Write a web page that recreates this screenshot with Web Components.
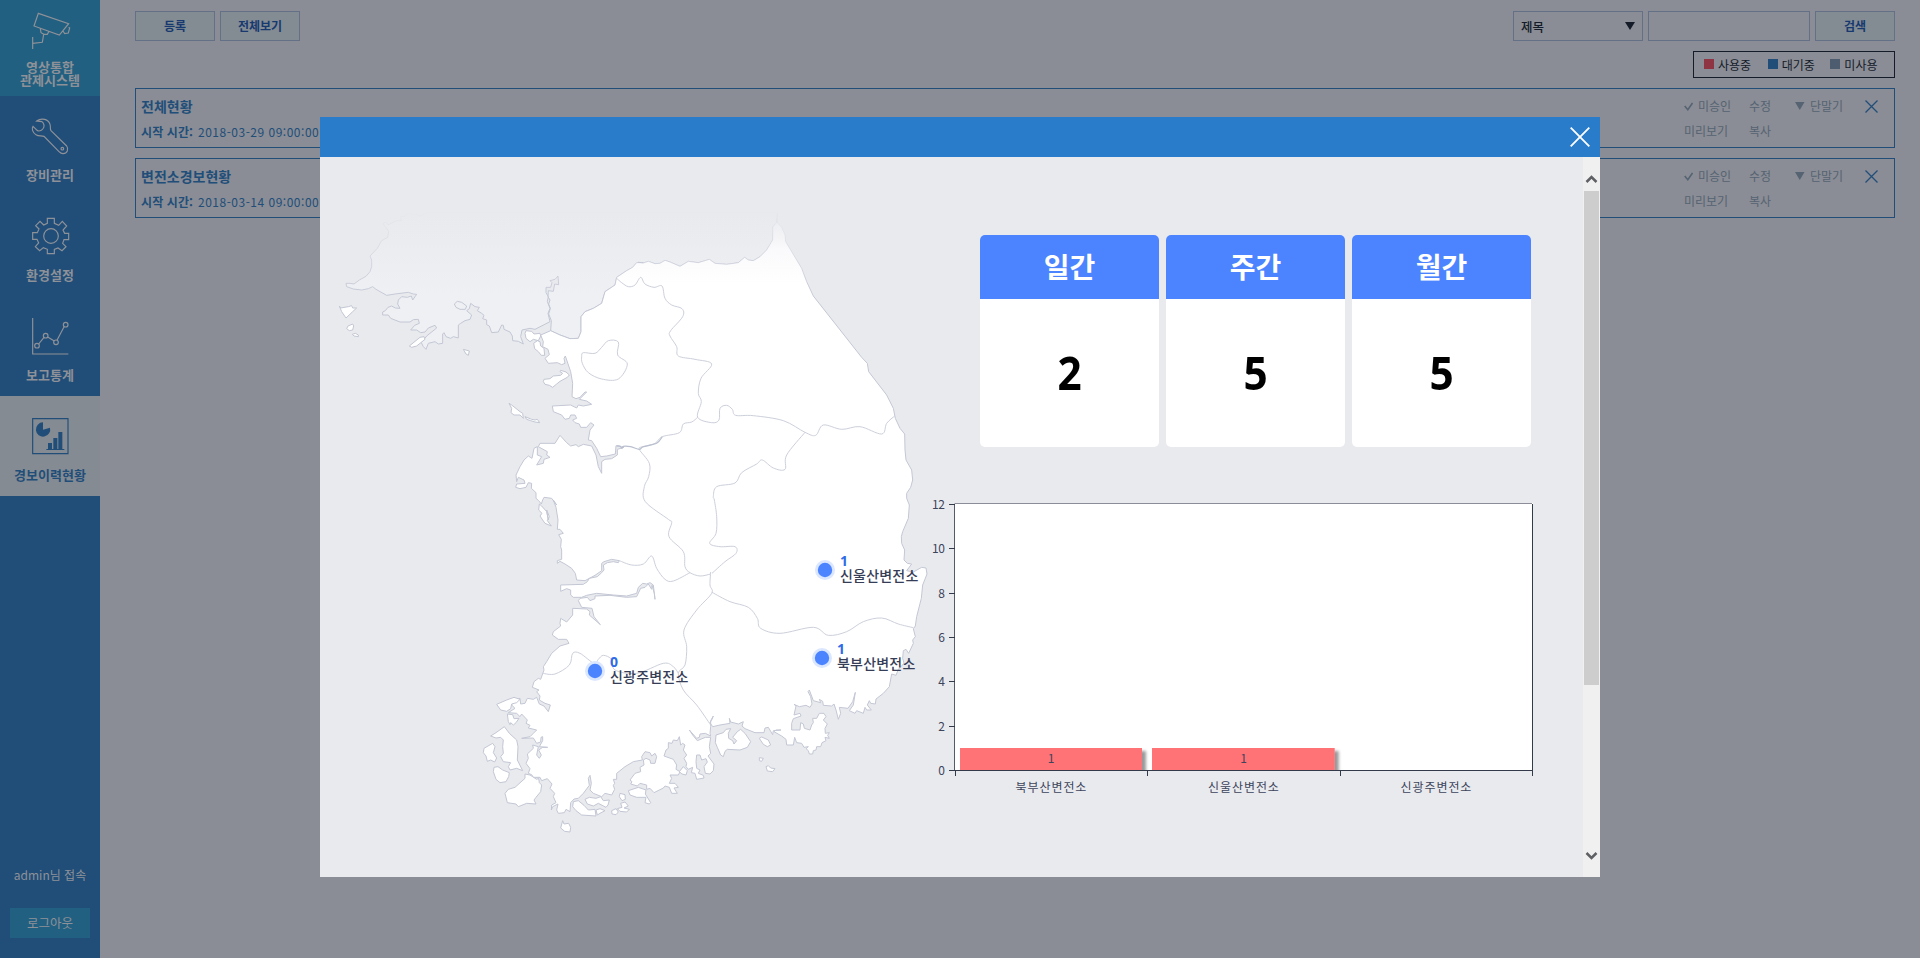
<!DOCTYPE html>
<html lang="ko">
<head>
<meta charset="utf-8">
<title>영상통합 관제시스템</title>
<style>
html,body{margin:0;height:100%;overflow:hidden;background:#8a8d95;font-family:"Noto Sans CJK KR","Noto Sans",sans-serif;font-size:12px}
</style>
</head>
<body>
<monitor-app></monitor-app>
<script>
const define = (name, html, setup) => customElements.define(name, class extends HTMLElement {
  connectedCallback() {
    if (this.shadowRoot) return;
    const t = document.createElement('template');
    t.innerHTML = typeof html === 'function' ? html(this) : html;
    this.attachShadow({mode: 'open'}).append(t.content.cloneNode(true));
    if (setup) setup(this.shadowRoot, this);
  }
});

/* ---- sidebar ---- */
const icons = {
  camera: '<svg viewBox="0 0 300 183" height="61"><path d="M115 40 206 71 178 105 102 78ZM206 82 209 84 205 99 194 101 189 93M121 86 123 98 132 103 142 103 147 94M131 103 127 127 98 130M98 111V147"/></svg>',
  wrench: '<svg viewBox="0 288 300 210" height="70"><path d="M110 363C125 352 146 358 150 373C153 382 149 387 153 392L200 438C207 447 202 461 189 461C184 461 181 459 177 455L132 409C123 406 117 410 108 404C98 398 94 386 99 379L109 389C112 393 118 394 124 391C131 387 134 378 131 372C130 369 128 366 126 365L110 363Z"/><circle cx="187" cy="446" r="4"/></svg>',
  gear: '<svg viewBox="0 588 300 210" height="70"><path d="M142 655H163V670L176 676 187 664 200 678 189 690 194 700H206V719H192L188 730 198 740 186 752 174 744 163 748V761H142V748L130 743 119 752 106 740 116 729 111 718H98V698H112L117 687 107 677 120 664 131 675 142 670Z"/><circle cx="153" cy="708" r="22"/></svg>',
  graph: '<svg viewBox="0 108 300 210" height="70"><path d="M98 174V282H205M116 252 132 232M143 231 163 243M171 241 193 199"/><circle cx="111" cy="257" r="7"/><circle cx="137" cy="227" r="7"/><circle cx="168" cy="247" r="7"/><circle cx="197" cy="194" r="7"/></svg>',
  report: '<svg viewBox="0 408 300 210" height="70"><path d="M98 476H204V581H98Z"/><path d="M129 487A21.5 21.5 0 1 0 150 503L129 509ZM144 549H156V568H144ZM160 534H172V568H160ZM175 516H187V568H175ZM139 567H193V570H139Z" fill="currentColor" stroke="none"/></svg>'
};
define('nav-item', el => `<style>
:host{display:block;height:100px;box-sizing:border-box;color:#8e9198;text-align:center;font-weight:700;font-size:13px}
:host([kind=camera]){height:96px;background:#226081}
:host([kind=report]){background:#858b92;color:#214e79}
svg{display:block;width:100px;fill:none;stroke:currentColor;stroke-width:3.5}
div{line-height:20px;margin-top:-1px;white-space:nowrap}
:host([kind=camera]) div{line-height:13px}
</style>${icons[el.getAttribute('kind')]}<div><slot></slot></div>`);

define('side-bar', `<style>
:host{display:flex;flex-direction:column;width:100px;height:958px;background:#214e79;color:#8e9198;text-align:center}
.user{margin-top:auto;line-height:18px;font-size:12px;white-space:nowrap}
.out{margin:24px 10px 20px;height:30px;line-height:30px;background:#226081;font-size:12.5px}
</style>
<nav-item kind="camera">영상통합<br>관제시스템</nav-item>
<nav-item kind="wrench">장비관리</nav-item>
<nav-item kind="gear">환경설정</nav-item>
<nav-item kind="graph">보고통계</nav-item>
<nav-item kind="report">경보이력현황</nav-item>
<div class="user">admin님 접속</div>
<div class="out">로그아웃</div>`);

/* ---- page behind the dialog ---- */
define('push-button', `<style>
:host{display:block;box-sizing:border-box;width:80px;height:30px;border:1px solid #637085;background:#838c93;color:#17396f;font-weight:700;line-height:28px;text-align:center}
</style><slot></slot>`);

define('tool-bar', `<style>
:host{display:flex;gap:5px;height:30px}
.select,.input{box-sizing:border-box;border:1px solid #637085;height:30px}
.select{margin-left:auto;width:130px;display:flex;justify-content:space-between;align-items:center;padding:0 7px;color:#141b29;font-weight:500;font-size:12.5px}
.input{width:162px}
svg{width:10px;height:8px}
</style>
<push-button>등록</push-button><push-button>전체보기</push-button>
<div class="select">제목<svg viewBox="0 0 10 8"><path d="M0 0H10L5 8Z" fill="#141b29"/></svg></div>
<div class="input"></div><push-button>검색</push-button>`);

define('status-legend', `<style>
:host{display:flex;box-sizing:border-box;width:202px;height:27px;margin:10px 0 10px auto;border:1px solid #141b29;padding-left:10px;color:#141b29;line-height:26px}
span{width:64px;display:flex;white-space:nowrap}
i{width:10px;height:10px;margin:7px 4px 0 0}
</style>
<span><i style="background:#8e3442"></i>사용중</span><span style="width:63px"><i style="background:#214e79"></i>대기중</span><span><i style="background:#4d5c6e"></i>미사용</span>`);

define('schedule-row', `<style>
:host{display:flex;justify-content:space-between;box-sizing:border-box;height:60px;margin-bottom:10px;border:1px solid #214e79;color:#214e79;padding-left:5px}
.title{font-size:14px;font-weight:700;line-height:20px;margin-top:7px}
.time{line-height:20px;margin-top:6px;letter-spacing:.5px}
.time b{letter-spacing:.1px;margin-right:5px}
.acts{display:grid;grid-template-columns:65px 46px 70px 29px;grid-template-rows:24px 24px;padding-top:5px;row-gap:1px;color:#566372;line-height:24px}
.a{display:flex;align-items:center;gap:5px}
svg{fill:none;stroke:currentColor}
</style>
<div><div class="title"><slot></slot></div><div class="time"><b>시작 시간:</b><slot name="time"></slot></div></div>
<div class="acts">
<div class="a"><svg width="9" height="9"><path d="M.7 4 3.8 7.7 8.5 1" stroke-width="1.6"/></svg>미승인</div><div>수정</div>
<div class="a"><svg width="10" height="8"><path d="M0 0H9.500L4.750 8Z" fill="currentColor" stroke="none"/></svg>단말기</div>
<div class="a"><svg width="13" height="13" style="color:#214e79"><path d="M.5.5 12.500 12.500M12.500.5.5 12.500" stroke-width="1.300"/></svg></div>
<div>미리보기</div><div>복사</div>
</div>`);

/* ---- map ----
   Points are in thirds of a pixel, grouped by the tile they belong to. */
const tiles = {A: [320, 200], B: [600, 200], C: [470, 500], D: [700, 500]};
const pts = spec => {
  const out = []; let o;
  const tok = spec.match(/[A-D]|-?[\d.]+/g);
  for (let i = 0; i < tok.length;) {
    if (tiles[tok[i]]) { o = tiles[tok[i++]]; continue; }
    out.push([+(o[0] + tok[i] / 3).toFixed(2), +(o[1] + tok[i + 1] / 3).toFixed(2)]); i += 2;
  }
  return out;
};
const poly = s => 'M' + pts(s).join('L') + 'Z';
const curve = (s, closed) => {
  const p = pts(s), n = p.length, g = i => closed ? p[(i + n) % n] : p[Math.max(0, Math.min(n - 1, i))];
  let d = 'M' + p[0];
  for (let i = 0; i < (closed ? n : n - 1); i++) {
    const [a, b, c, e] = [g(i - 1), g(i), g(i + 1), g(i + 2)];
    d += `C${b[0] + (c[0] - a[0]) / 6} ${b[1] + (c[1] - a[1]) / 6} ${c[0] - (e[0] - b[0]) / 6} ${c[1] - (e[1] - b[1]) / 6} ${c[0]} ${c[1]}`;
  }
  return d;
};
const frontier = 'A 692 392 720 405 750 416 775 415 783 395 783 350 795 335 820 325 845 310 855 275 885 255 890 232 920 212 938 202 950 188 970 188 B 115 187 130 189 145 184 165 191 180 190 195 181 210 186 240 199 265 184 295 188 328 178 345 190 380 193 415 188 434 172 445 180 460 182 480 170 500 150 518 120 519 80 530 68 532 38';
const north = 'A 320 38 300 48 285 42 262 40 255 50 240 50 245 62 230 62 205 74 195 66 190 72 200 85 206 95 203 112 185 122 172 145 150 168 155 180 155 200 150 215 138 229 118 240 102 252 90 250 78 250 80 260 100 267 125 270 145 266 158 260 168 268 200 286 225 282 265 277 280 282 290 283 278 300 274 288 262 292 245 290 235 300 233 312 240 325 226 324 215 318 204 322 196 332 188 336 188 345 205 345 212 355 240 366 270 366 280 359 295 358 298 370 284 376 272 390 290 390 302 398 315 396 325 384 345 376 350 384 330 400 320 408 304 428 310 440 318 448 325 430 345 425 355 432 368 430 368 402 372 398 378 410 392 415 400 410 415 414 415 375 422 370 435 362 450 358 455 345 440 332 448 326 452 310 465 320 478 322 472 332 485 340 492 346 488 356 500 360 500 374 508 378 515 398 535 396 545 375 550 376 552 388 570 396 577 408 578 422 595 424 610 432 602 410 606 390 630 385 645 388 690 365 684 340 690 325 682 305 685 290 678 278 678 262 692 262 696 248 690 242 705 238 714 228 716 254 704 252 700 274 685 272 684 290 690 300 686 312 691 325 686 342 694 362 ' + frontier;
const south = frontier + ' B 532 68 545 82 555 105 557 125 605 205 620 245 640 288 785 472 802 490 806 515 860 585 880 625 886 655 900 685 914 702 915 750 918 780 935 810 938 840 932 862 920 880 920 895 928 915 925 955 D 608 95 604 110 605 130 614 150 612 180 622 190 635 192 620 212 640 216 665 202 678 204 681 222 668 255 664 295 650 350 646 378 640 386 646 410 638 420 640 430 626 460 618 448 610 452 608 475 612 490 595 508 588 526 575 522 568 560 550 580 528 597 526 612 512 610 508 602 502 615 514 630 500 630 495 622 490 640 470 632 465 640 448 632 460 615 466 577 458 605 444 625 418 622 422 640 415 658 408 630 402 612 395 618 370 616 368 604 358 598 362 608 340 602 328 570 324 575 332 590 336 612 330 622 318 616 298 620 282 613 288 618 282 645 300 640 303 648 280 656 275 670 275 690 300 690 302 668 310 672 313 685 330 690 335 675 340 668 338 655 350 655 358 640 372 640 378 650 370 660 382 672 375 685 376 700 388 698 383 706 388 715 375 712 378 722 366 728 362 740 350 740 348 750 340 752 338 762 328 762 325 752 318 746 325 740 312 742 305 730 290 728 284 712 280 735 260 735 258 718 245 708 222 695 228 690 243 690 220 692 218 704 205 682 195 684 192 698 165 698 135 686 126 678 130 665 115 672 92 666 88 655 90 670 60 675 38 680 30 668 36 658 40 648 32 662 C 722 680 720 700 722 708 706 700 690 702 688 712 680 715 658 690 668 705 682 722 706 712 722 712 718 740 722 760 714 768 732 792 730 812 720 822 706 820 702 800 712 786 708 776 695 780 690 765 680 765 678 785 680 805 690 810 685 820 700 826 702 834 680 838 675 820 664 818 668 802 655 808 648 800 650 790 642 775 650 765 640 750 645 735 638 730 632 735 628 710 622 722 610 720 606 730 595 728 595 745 588 750 582 768 610 778 620 795 618 808 630 815 625 825 600 825 605 835 598 850 615 850 625 862 612 864 622 880 605 880 598 862 585 858 580 864 552 878 540 865 530 868 530 855 510 850 502 858 482 852 486 845 480 840 495 820 512 815 510 802 522 795 520 780 528 775 540 780 542 790 555 790 560 770 555 760 545 768 540 758 525 755 515 770 517 780 490 785 465 800 440 820 440 838 430 838 434 850 430 856 434 868 425 885 405 880 395 890 370 880 360 870 364 850 360 826 355 835 358 856 340 880 325 895 312 897 302 908 300 935 288 928 283 938 265 940 260 930 264 912 248 920 244 930 245 915 258 908 250 890 254 880 240 865 246 852 232 836 215 842 210 832 190 832 185 824 175 820 180 806 168 790 175 775 172 762 190 745 188 735 205 740 200 765 208 775 214 765 206 750 218 742 233 742 208 740 218 722 218 710 213 712 212 726 200 730 190 714 155 715 180 710 190 700 200 690 175 684 180 676 168 670 172 660 155 642 150 650 140 640 115 638 135 625 125 615 130 600 150 595 152 612 165 610 172 595 190 598 200 592 208 612 222 618 235 635 241 615 225 610 208 600 210 588 200 575 207 570 187 562 192 545 205 535 212 538 222 510 220 500 230 485 245 460 270 438 297 430 290 418 265 418 247 405 250 395 272 378 270 370 272 355 290 366 308 345 308 325 350 327 360 335 358 345 391 374 372 350 366 325 335 322 325 302 330 295 352 292 360 302 375 296 375 288 420 286 470 292 500 290 512 265 525 262 535 252 545 268 546 256 553 280 555 298 550 255 540 248 530 252 518 250 505 262 500 280 470 288 430 285 380 280 350 286 335 292 310 292 302 285 302 270 290 266 272 274 272 255 340 253 352 245 358 235 382 230 395 218 402 210 400 195 412 188 430 185 445 188 448 182 425 178 402 185 395 190 395 212 375 226 345 242 320 240 316 220 305 205 285 192 270 184 262 190 262 182 275 178 275 150 272 140 274 118 266 104 280 100 270 88 262 88 264 60 258 22 250 0 A 710 915 695 895 672 892 668 900 664 912 656 902 648 895 648 878 634 865 635 850 625 848 618 862 600 866 587 862 590 852 615 850 612 840 595 832 590 845 588 825 600 800 612 780 625 768 636 775 642 745 652 740 652 765 665 770 650 795 670 790 672 778 690 772 680 765 682 755 655 740 660 730 705 730 720 706 740 728 752 738 768 734 775 740 790 733 815 738 828 765 835 800 845 820 845 785 855 778 875 776 892 765 892 748 912 742 900 740 888 737 886 762 860 768 842 770 830 745 815 722 805 720 810 690 822 675 812 668 800 682 782 682 778 672 765 668 758 660 770 655 765 645 752 645 748 655 735 658 725 645 700 635 697 618 752 615 770 624 775 615 790 618 815 613 800 603 778 598 800 576 795 576 780 592 768 596 756 590 758 550 752 515 736 468 732 475 735 490 725 494 712 488 685 490 675 475 688 464 684 448 668 440 670 425 662 405';
const islands = ['A 58 318 62 324 85 320 95 317 98 324 110 324 98 335 78 354 65 335', 'A 84 378 98 372 101 378 98 390 88 392 80 386', 'A 97 403 106 400 115 405 115 410 102 408', 'A 268 438 300 412 312 410 315 418 290 438 275 442', 'A 430 448 448 453 445 466 438 462', 'A 615 400 618 392 635 394 642 402 660 400 662 408 655 422 640 418 630 425 618 415', 'A 641 430 652 422 660 425 662 438 672 445 674 466 664 466 655 455 644 446', 'A 670 545 672 538 690 536 700 528 722 526 728 520 720 515 722 511 738 516 748 525 742 532 720 544 710 552 698 562 688 556 675 553', 'A 567 610 575 615 600 635 608 640 610 655 600 645 582 645 573 638 575 625', 'A 615 650 635 658 645 660 652 658 659 668 645 666 632 662 620 658',
'A 665 918 680 935 685 960 C 230 30 238 50 232 62 244 78 225 70 218 60 210 48 216 40 206 30 208 12', 'C 80 613 110 600 132 592 150 598 140 608 125 612 122 626 110 634 92 630', 'C 112 642 128 644 132 656 147 655 138 668 130 675 122 668 120 674 115 665', 'C 62 708 78 698 103 680 118 700 140 720 144 740 142 780 158 812 140 805 120 810 115 800 122 788 100 785 92 770 100 760 98 740 100 720 92 712 78 714', 'C 42 745 68 730 75 740 70 758 80 774 74 786 62 780 52 784 48 768 40 758', 'C 72 802 84 800 98 810 118 818 116 830 108 845 90 848 78 838 70 815', 'C 105 880 115 868 135 862 165 835 165 822 180 825 200 838 206 835 208 848 215 855 212 875 198 892 192 900 198 912 170 910 145 920 138 912 112 908', 'C 278 962 282 972 296 970 302 982 300 996 284 994 272 984', 'C 310 905 325 902 342 916 355 930 375 928 378 948 335 945 318 932 308 920', 'C 345 898 358 892 378 895 392 890 400 902 418 900 414 915 408 922 385 910 370 918 352 912', 'C 378 930 390 926 405 932 390 940 382 945', 'C 425 932 438 926 445 936 438 944 426 942', 'C 450 880 465 884 466 898 456 902 448 890', 'C 442 926 456 922 452 910 465 906 475 918 462 924 478 928 470 936 450 934', 'C 475 872 505 862 528 870 526 882 542 908 538 912 525 908 528 892 500 892 480 885', 'C 628 815 640 800 652 812 648 825 636 822', 'D 48 705 70 698 78 688 92 686 85 700 86 715 98 722 102 732 110 722 98 712 112 695 122 688 135 700 152 725 142 742 120 750 82 748 75 754 70 770 62 765 52 742 46 728', 'D 178 715 185 711 205 720 212 735 202 740 190 733', 'D 178 773 190 775 185 784 178 782', 'D 198 800 205 797 212 804 225 806 218 815 202 813'];
const borders = ['B 50 235 65 248 85 260 105 255 122 232 135 252 162 262 186 258 195 295 215 315 246 326 248 350 212 392 210 408 230 440 235 468 285 478 335 492 303 535 295 580 304 605 293 652 335 668 357 660 360 625 380 616 397 628 407 646 460 647 550 662 615 697 647 706 670 675 725 688 780 680 845 702 860 670 884 648',
'B 293 652 275 666 250 672 238 698 187 710 165 730 130 740 118 748 148 790 146 830 133 860 136 905 205 958 C 605 68 597 110 640 155 645 200 660 218 690 228 722 222', 'D 36 220 75 185 108 160 105 140 60 140 29 130 48 100 50 50 43 0 B 340 890 350 860 405 849 425 818 470 792 487 780 520 804 555 808 560 765 615 697',
'C 660 218 610 243 585 238 560 205 545 168 520 192 485 195 448 182', 'C 722 216 720 255 725 280 680 330 642 390 650 440 645 495 625 520 640 570 680 615 722 675', 'D 36 277 90 305 145 322 172 355 182 385 240 400 340 382 385 406 440 395 490 365 545 354 595 372 640 383', 'C 218 520 255 522 298 495 308 460 330 460 372 490 385 478 400 466 425 478 435 510 500 520 580 490 610 500 625 520'];
const marker = (x, y, n, name) => `<g transform="translate(${x} ${y})"><circle r="10" fill="#dbe6ff"/><circle r="7.200" fill="#4c84ff"/><text x="15" y="-4" class="n">${n}</text><text x="15" y="10.800">${name}</text></g>`;

define('korea-map', `<style>
:host{display:block;width:620px;height:720px}
svg{display:block}
text{font-size:14px;font-weight:500;fill:#363d56;letter-spacing:.2px}
.n{fill:#2f6be8;font-family:"Noto Sans",sans-serif;font-weight:700}
</style>
<svg width="620" height="720" viewBox="320 157 620 720">
<defs>
<linearGradient id="nf" gradientUnits="userSpaceOnUse" x1="0" y1="214" x2="0" y2="295"><stop offset="0" stop-color="#e9eaee"/><stop offset="1" stop-color="#eff0f4"/></linearGradient>
<linearGradient id="sf" gradientUnits="userSpaceOnUse" x1="0" y1="215" x2="0" y2="285"><stop offset="0" stop-color="#e9eaee"/><stop offset=".5" stop-color="#fafafc"/><stop offset="1" stop-color="#fff"/></linearGradient>
<linearGradient id="st" gradientUnits="userSpaceOnUse" x1="0" y1="210" x2="0" y2="300"><stop offset="0" stop-color="#c3c7d4" stop-opacity="0"/><stop offset="1" stop-color="#c3c7d4"/></linearGradient>
</defs>
<g stroke="url(#st)" stroke-width="1" stroke-linejoin="round">
<path d="${poly(north)}" fill="url(#nf)"/>
<path d="${poly('A 403 312 412 304 425 307 440 318 436 328 420 328 408 322')}" fill="#eff0f4"/>
<path d="${poly(south)}" fill="url(#sf)"/>
</g>
<path d="${islands.map(poly).join('')}" fill="#fff" stroke="#c3c7d4"/>
<path d="${borders.map(b => curve(b)).join('')}${curve('A 785 470 790 458 825 460 845 442 865 422 895 426 893 465 922 492 895 537 845 537 805 518 787 490', true)}" fill="none" stroke="#cdd0db"/>
<path d="${curve('B 187 710 170 730 130 740 118 748 92 740 70 739 66 745 60 738 50 738')}" fill="none" stroke="#b9bfcf" stroke-width="1.200"/>
${marker(825, 570, 1, '신울산변전소')}${marker(822, 658, 1, '북부산변전소')}${marker(595, 671, 0, '신광주변전소')}
</svg>`);

/* ---- counters and chart ---- */
define('count-card', `<style>
:host{display:flex;flex-direction:column;width:179px;height:212px;border-radius:5px;overflow:hidden;background:#fff;text-align:center}
header{height:64px;line-height:62px;background:#4c84ff;color:#fff;font-size:28px;font-weight:700}
div{flex:1;line-height:146px;font-family:"Noto Sans",sans-serif;font-size:46px;font-weight:700;color:#000;transform:scaleX(.92)}
</style><header><slot></slot></header><div><slot name="n"></slot></div>`);

define('bar-chart', () => {
  const ys = [770.5, 726.5, 681.5, 637.5, 593.5, 548.5, 504.5];
  const names = ['북부산변전소', '신울산변전소', '신광주변전소'];
  return `<style>
:host{display:block;width:620px;height:316px}
svg{display:block}
text{font-size:12px;fill:#3d455c}
.name{letter-spacing:.95px}
.y{letter-spacing:-.4px}
</style>
<svg width="620" height="316" viewBox="930 490 620 316">
<defs><filter id="sh" x="-10%" y="-40%" width="120%" height="180%"><feDropShadow dx="4" dy="3" stdDeviation="1.500" flood-color="#000" flood-opacity=".4"/></filter><clipPath id="cp"><path d="M955 503H1533V770H955Z"/></clipPath></defs>
<path d="M955 503H1533V770H955Z" fill="#fff"/>
<g clip-path="url(#cp)" fill="#ff7276"><path d="M960 748H1142V780H960Z" filter="url(#sh)"/><path d="M1152 748H1334.700V780H1152Z" filter="url(#sh)"/></g>
<path d="M954.500 503.500H1532" stroke="#8b8e99"/>
<path d="M954.500 504V770" stroke="#555a6b"/>
<path d="M1532.500 504V776M949 770.500H1533M955.500 771V776M1147.500 771V776M1340.500 771V776M${ys.map(y => `949 ${y}H955`).join('M')}" stroke="#333a4a" fill="none"/>
${ys.map((y, i) => `<text class="y" x="944.600" y="${y + 4}" text-anchor="end">${i * 2}</text>`).join('')}
${names.map((n, i) => `<text class="name" x="${1051.4 + i * 192.5}" y="791.500" text-anchor="middle">${n}</text>`).join('')}
<text x="1051" y="763" text-anchor="middle">1</text><text x="1243.500" y="763" text-anchor="middle">1</text>
</svg>`;
});

define('scroll-bar', `<style>
:host{display:flex;flex-direction:column;box-sizing:border-box;width:17px;height:720px;background:#f0f0f0;padding:17px 0 16px}
div{height:494px;background:#cdcdcd;margin:7px 1px auto}
svg{display:block;margin:0 auto;fill:none;stroke:#5f6064;stroke-width:2.500}
</style>
<svg width="13" height="10"><path d="M1.500 8 6.500 3 11.500 8"/></svg><div></div><svg width="13" height="10"><path d="M1.500 2 6.500 7 11.500 2"/></svg>`);

define('alarm-dialog', `<style>
:host{display:block;position:absolute;left:320px;top:117px;width:1280px;height:760px;background:#e9eaee}
header{height:40px;background:#297cca;display:flex;align-items:center;justify-content:flex-end;padding-right:10px;box-sizing:border-box}
main{display:grid;grid-template-columns:610px 653px 17px;height:720px}
.right{display:flex;flex-direction:column;padding-top:78px}
.cards{display:flex;gap:7px;padding-left:50px;height:212px;margin-bottom:43px}
</style>
<header><svg width="20" height="20"><path d="M.7.7 19.300 19.300M19.300.7.7 19.300" stroke="#fff" stroke-width="1.800"/></svg></header>
<main><korea-map></korea-map>
<div class="right"><div class="cards">
<count-card>일간<span slot="n">2</span></count-card><count-card>주간<span slot="n">5</span></count-card><count-card>월간<span slot="n">5</span></count-card>
</div><bar-chart></bar-chart></div>
<scroll-bar></scroll-bar></main>`);

define('monitor-app', `<style>
:host{display:flex;width:1920px;height:958px;position:relative}
main{flex:1;padding:11px 25px 0 35px}
</style>
<side-bar></side-bar>
<main><tool-bar></tool-bar><status-legend></status-legend>
<schedule-row>전체현황<span slot="time">2018-03-29 09:00:00</span></schedule-row>
<schedule-row>변전소경보현황<span slot="time">2018-03-14 09:00:00</span></schedule-row></main>
<alarm-dialog></alarm-dialog>`);
</script>
</body>
</html></script>
